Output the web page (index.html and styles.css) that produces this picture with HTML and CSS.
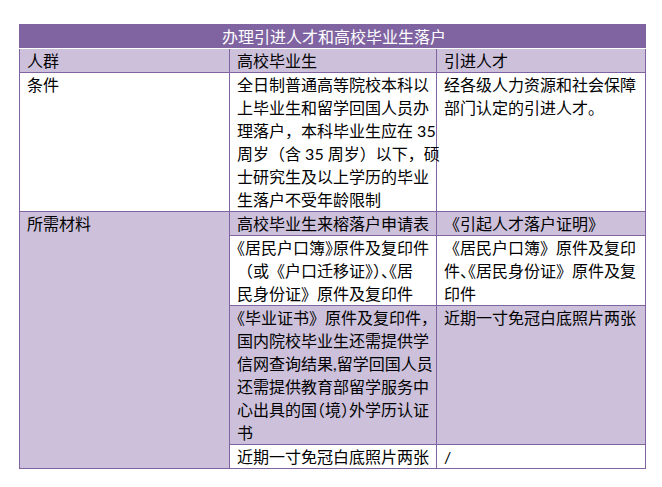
FILE: index.html
```html
<!DOCTYPE html>
<html lang="zh-CN">
<head>
<meta charset="utf-8">
<title>办理引进人才和高校毕业生落户</title>
<link rel="stylesheet" href="styles.css">
</head>
<body>
<div class="page">
<table class="grid">
<colgroup><col class="c1"><col class="c2"><col class="c3"></colgroup>
<thead>
<tr class="title"><th colspan="3">办理引进人才和高校毕业生落户</th></tr>
<tr class="head"><th>人群</th><th>高校毕业生</th><th>引进人才</th></tr>
</thead>
<tbody>
<tr class="plain">
<td>条件</td>
<td>全日制普通高等院校本科以<br>上毕业生和留学回国人员办<br>理落户，本科毕业生应在 35<br>周岁（含 35 周岁）以下，硕<br>士研究生及以上学历的毕业<br>生落户不受年龄限制</td>
<td>经各级人力资源和社会保障<br>部门认定的引进人才。</td>
</tr>
<tr class="tint">
<td rowspan="4" class="side">所需材料</td>
<td>高校毕业生来榕落户申请表</td>
<td>《引起人才落户证明》</td>
</tr>
<tr class="plain">
<td><span class="h">《</span>居民户口簿<span class="h">》</span>原件及复印件<br>（或《户口迁移证<span class="h">》）、</span>《居<br>民身份证》原件及复印件</td>
<td>《居民户口簿》原件及复印<br>件<span class="h">、《</span>居民身份证》原件及复<br>印件</td>
</tr>
<tr class="tint">
<td><span class="h">《</span>毕业证书》原件及复印件，<br>国内院校毕业生还需提供学<br>信网查询结果,留学回国人员<br>还需提供教育部留学服务中<br>心出具的国<span class="h">（</span>境<span class="h">）</span>外学历认证<br>书</td>
<td>近期一寸免冠白底照片两张</td>
</tr>
<tr class="plain">
<td>近期一寸免冠白底照片两张</td>
<td>/</td>
</tr>
</tbody>
</table>
</div>
</body>
</html>
```

FILE: styles.css
```css
* { box-sizing: border-box; }
body {
  margin: 0;
  background: #fff;
  font-family: "Lato", "Noto Sans CJK SC", sans-serif;
  font-size: 16px;
  color: #000;
}
.page { padding: 24px 0 0 19px; }
.grid {
  border-collapse: collapse;
  table-layout: fixed;
  width: 626px;
  border: 1px solid #8064a2;
}
.c1 { width: 210px; }
.c2 { width: 207px; }
.c3 { width: 209px; }
.grid th, .grid td {
  border: 1px solid #8064a2;
  padding: 0 4px 0 7px;
  line-height: 23px;
  text-align: left;
  vertical-align: top;
  font-weight: normal;
  white-space: nowrap;
}
.title th {
  background: #8064a2;
  color: #fff;
  text-align: center;
  border-bottom: 1px solid #fff;
}
.head th { background: #ccc0da; }
.tint td, .grid td.side { background: #ccc0da; }
.plain td { background: #fff; }
.h { font-feature-settings: "halt"; }
```
